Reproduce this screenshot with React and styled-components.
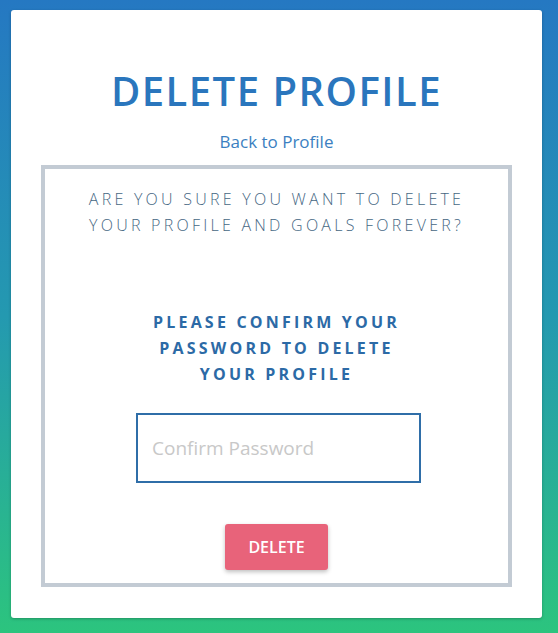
import styled, { createGlobalStyle } from "styled-components";

const GlobalStyle = createGlobalStyle`
  html, body {
    margin: 0;
    padding: 0;
  }
  body {
    font-family: "Open Sans", "Noto Sans", sans-serif;
    background: linear-gradient(180deg, #2578c2 0%, #2499b0 50%, #2cc47e 100%);
    min-height: 633px;
  }
`;

const Page = styled.div`
  height: 633px;
  box-sizing: border-box;
  padding: 10px 16px 15px 11px;
`;

const Card = styled.div`
  background: #ffffff;
  height: 100%;
  box-sizing: border-box;
  border-radius: 3px;
  box-shadow: 0 1px 3px rgba(0, 0, 0, 0.25);
  padding: 56px 30px 31px 30px;
  display: flex;
  flex-direction: column;
  align-items: center;
`;

const Title = styled.h1`
  margin: 0;
  font-size: 40px;
  line-height: 50px;
  font-weight: 600;
  letter-spacing: 1.5px;
  color: #2a76bd;
  text-align: center;
`;

const BackLink = styled.a`
  margin-top: 14px;
  font-size: 17px;
  line-height: 24px;
  color: #3b7fc1;
  text-decoration: none;
  cursor: pointer;
`;

const Box = styled.div`
  margin-top: 11px;
  flex: 1;
  align-self: stretch;
  border: 4px solid #c3cbd4;
  display: flex;
  flex-direction: column;
  align-items: center;
  padding: 17px 20px 0;
`;

const Question = styled.p`
  margin: 0;
  font-size: 16px;
  line-height: 26px;
  font-weight: 300;
  letter-spacing: 3.25px;
  color: #466783;
  text-align: center;
  max-width: 400px;
`;

const Confirm = styled.p`
  margin: 71px 0 0;
  font-size: 16px;
  line-height: 26px;
  font-weight: 700;
  letter-spacing: 3.2px;
  color: #2c6aa6;
  text-align: center;
  max-width: 280px;
`;

const PasswordInput = styled.input`
  margin: 26px 0 0 4px;
  width: 285px;
  height: 70px;
  box-sizing: border-box;
  border: 2px solid #2f6ea8;
  padding: 0 14px;
  font-family: inherit;
  font-size: 19px;
  font-weight: 400;
  color: #333;
  outline: none;
  &::placeholder {
    color: #c8c8c8;
  }
`;

const DeleteButton = styled.button`
  margin-top: 41px;
  width: 103px;
  height: 46px;
  border: none;
  border-radius: 3px;
  background: #e8637a;
  color: #ffffff;
  font-family: inherit;
  font-size: 16px;
  font-weight: 600;
  box-shadow: 0 2px 4px rgba(0, 0, 0, 0.25);
  cursor: pointer;
`;

export default function App() {
  return (
    <>
      <GlobalStyle />
      <Page>
        <Card>
          <Title>DELETE PROFILE</Title>
          <BackLink>Back to Profile</BackLink>
          <Box>
            <Question>
              ARE YOU SURE YOU WANT TO DELETE YOUR PROFILE AND GOALS FOREVER?
            </Question>
            <Confirm>PLEASE CONFIRM YOUR PASSWORD TO DELETE YOUR PROFILE</Confirm>
            <PasswordInput type="password" placeholder="Confirm Password" />
            <DeleteButton>DELETE</DeleteButton>
          </Box>
        </Card>
      </Page>
    </>
  );
}
